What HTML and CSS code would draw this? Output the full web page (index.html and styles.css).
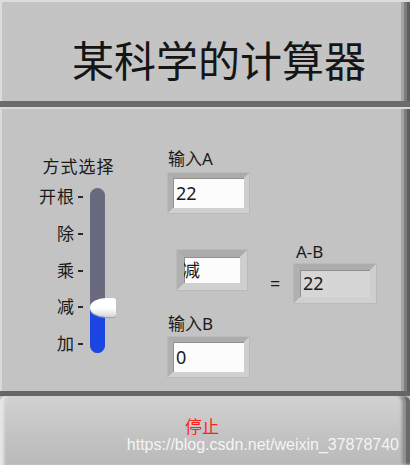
FILE: index.html
```html
<!DOCTYPE html>
<html lang="zh">
<head>
    <meta charset="UTF-8">
    <meta name="viewport" content="width=device-width, initial-scale=1.0">
    <title>某科学的计算器</title>
    <link rel="stylesheet" href="styles.css">
</head>
<body>
    <div class="banner">
        <h1>某科学的计算器</h1>
    </div>
    <div class="panel">
        <div class="selector">
            <div class="selector-label">方式选择</div>
            <div class="scale">
                <div class="scale-labels">
                    <span class="tick">开根</span>
                    <span class="tick">除</span>
                    <span class="tick">乘</span>
                    <span class="tick">减</span>
                    <span class="tick">加</span>
                </div>
                <div class="track">
                    <div class="fill"></div>
                    <div class="thumb"></div>
                </div>
            </div>
        </div>
        <div class="operands">
            <div class="label">输入A</div>
            <div class="field">22</div>
            <div class="ring">减</div>
            <div class="label label-b">输入B</div>
            <div class="field">0</div>
        </div>
        <div class="equals">=</div>
        <div class="result">
            <div class="label">A-B</div>
            <div class="field field-out">22</div>
        </div>
    </div>
    <div class="stop-bar">
        <button class="stop">停止</button>
        <span class="watermark">https://blog.csdn.net/weixin_37878740</span>
    </div>
</body>
</html>
```
FILE: styles.css
```css
body {
    margin: 0;
    width: 410px;
    height: 465px;
    overflow: hidden;
    background: #c3c3c3;
    font-family: "Noto Sans", "Noto Sans CJK SC", sans-serif;
    color: #1a1a1a;
    display: flex;
    flex-direction: column;
}
.banner {
    box-sizing: border-box;
    height: 107px;
    background: #c4c4c4;
    border-bottom: 6px solid #6c6c6c;
    box-shadow: inset 0 2px 0 #dcdcdc, inset 2px 0 0 #dcdcdc,
        inset -3px 0 0 #5e5e5e, inset -6px 0 0 #7c7c7c, inset -9px 0 0 #a4a4a4;
}
.banner h1 {
    margin: 0;
    padding: 38px 0 0 72px;
    font-family: "Noto Sans CJK SC", sans-serif;
    font-size: 42px;
    font-weight: normal;
    line-height: 1;
    color: #151515;
}
.panel {
    box-sizing: border-box;
    height: 289px;
    background: #c3c3c3;
    border-bottom: 5px solid #666;
    display: flex;
    align-items: flex-start;
    box-shadow: inset 0 2px 0 #dadada, inset 2px 0 0 #dadada,
        inset -3px 0 0 #5e5e5e, inset -6px 0 0 #7c7c7c, inset -9px 0 0 #a4a4a4;
    font-size: 17px;
}
.selector {
    margin: 50px 0 0 37px;
    width: 79px;
}
.selector-label {
    line-height: 20px;
    text-align: center;
    padding-left: 4px;
    letter-spacing: 1px;
}
.scale {
    display: flex;
    margin-top: 11px;
}
.scale-labels {
    width: 53px;
    height: 165px;
    display: flex;
    flex-direction: column;
    justify-content: space-between;
    align-items: flex-end;
}
.tick {
    line-height: 18px;
    display: flex;
    align-items: center;
    letter-spacing: 1px;
}
.tick::after {
    content: "";
    width: 5px;
    height: 2px;
    margin: 0 7px 0 3px;
    background: #2a2a2a;
}
.track {
    position: relative;
    width: 15px;
    height: 165px;
    border-radius: 8px;
    background: #6a6a7e;
    display: flex;
    flex-direction: column;
    justify-content: flex-end;
}
.fill {
    height: 44px;
    border-radius: 0 0 8px 8px;
    background: #1c46e2;
}
.thumb {
    position: absolute;
    left: 0;
    top: 110px;
    width: 26px;
    height: 19px;
    border-radius: 16px 3px 3px 16px / 9px 3px 3px 9px;
    background: linear-gradient(#ffffff 55%, #d4d4d4);
    box-shadow: 0 1px 0 #a0a0a0;
}
.operands {
    margin: 42px 0 0 52px;
    display: flex;
    flex-direction: column;
    align-items: flex-start;
}
.label {
    line-height: 20px;
}
.field {
    margin-top: 4px;
    width: 68px;
    height: 30px;
    padding-left: 3px;
    border: 5px solid;
    border-color: #acacac #cecece #d0d0d0 #b0b0b0;
    box-shadow: 0 0 0 1px #bababa, inset 1px 1px 0 #909090;
    background: #fcfcfc;
    font-size: 18px;
    line-height: 30px;
}
.ring {
    margin: 37px 0 0 9px;
    width: 56px;
    height: 26px;
    border: 7px solid;
    border-color: #acacac #cecece #d0d0d0 #b0b0b0;
    box-shadow: 0 0 0 1px #bababa, inset 1px 1px 0 #909090;
    background: #fcfcfc;
    font-size: 18px;
    line-height: 26px;
    text-indent: -2px;
    overflow: hidden;
}
.label-b {
    margin-top: 24px;
}
.label-b + .field {
    margin-top: 3px;
}
.equals {
    margin: 166px 0 0 21px;
    width: 12px;
    font-size: 18px;
    line-height: 20px;
}
.result {
    margin: 135px 0 0 12px;
    display: flex;
    flex-direction: column;
    align-items: flex-start;
}
.result .label {
    padding-left: 2px;
}
.field-out {
    margin-top: 2px;
    border-width: 6px;
    width: 67px;
    height: 27px;
    line-height: 27px;
    background: #d6d6d6;
}
.stop-bar {
    position: relative;
    flex: 1;
    display: flex;
}
.stop {
    flex: 1;
    border: none;
    border-radius: 6px 6px 0 0;
    background: linear-gradient(#d2d2d2, #c2c2c2 60%, #bababa);
    box-shadow: inset 4px 0 3px #e6e6e6, inset -4px 0 0 #6a6a6a, inset -8px 0 3px #8e8e8e,
        inset 0 2px 0 #dedede;
    font-family: "Noto Sans CJK SC", sans-serif;
    font-size: 17px;
    color: #ff1c1c;
    padding: 0 6px 10px 0;
    cursor: pointer;
}
.watermark {
    position: absolute;
    right: 11px;
    bottom: 11px;
    font-family: "Liberation Sans", Arial, sans-serif;
    font-size: 16px;
    line-height: 18px;
    color: rgba(255, 255, 255, 0.85);
    pointer-events: none;
}
```
